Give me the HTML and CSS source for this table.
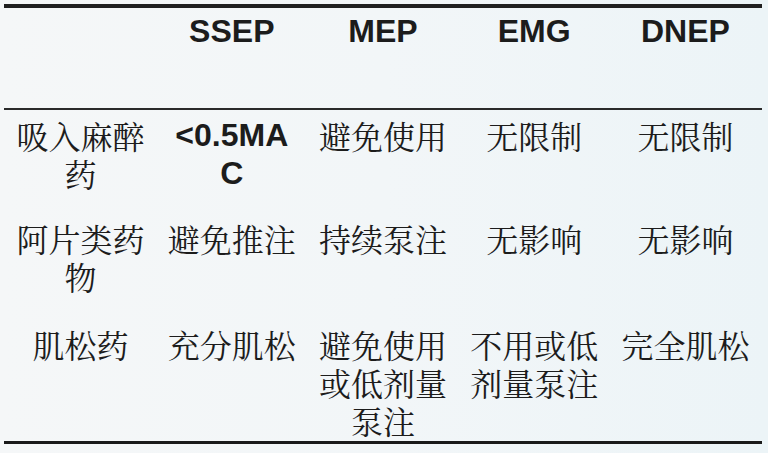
FILE: index.html
```html
<!DOCTYPE html>
<html lang="zh-CN">
<head>
<meta charset="utf-8">
<title>监测与麻醉药物</title>
<link rel="stylesheet" href="styles.css">
</head>
<body>
<div class="page">
  <div class="topline"></div>
  <div class="table">
    <div class="row head">
      <div class="cell"></div>
      <div class="cell latin">SSEP</div>
      <div class="cell latin">MEP</div>
      <div class="cell latin">EMG</div>
      <div class="cell latin">DNEP</div>
    </div>
    <div class="rule thin"></div>
    <div class="row r1">
      <div class="cell">吸入麻醉药</div>
      <div class="cell latin">&lt;0.5MAC</div>
      <div class="cell">避免使用</div>
      <div class="cell">无限制</div>
      <div class="cell">无限制</div>
    </div>
    <div class="row r2">
      <div class="cell">阿片类药物</div>
      <div class="cell">避免推注</div>
      <div class="cell">持续泵注</div>
      <div class="cell">无影响</div>
      <div class="cell">无影响</div>
    </div>
    <div class="row r3">
      <div class="cell">肌松药</div>
      <div class="cell">充分肌松</div>
      <div class="cell">避免使用或低剂量泵注</div>
      <div class="cell">不用或低剂量泵注</div>
      <div class="cell">完全肌松</div>
    </div>
  </div>
  <div class="rule thick"></div>
</div>
</body>
</html>
```
FILE: styles.css
```css
html, body {
  margin: 0;
  padding: 0;
}
body {
  width: 768px;
  height: 453px;
  overflow: hidden;
  background: linear-gradient(90deg, #f5f7f8 0%, #f2f6f8 50%, #ecf4f7 100%);
  font-family: "Noto Serif CJK SC", "Noto Sans CJK SC", serif;
  color: #1c1c1c;
}
.page {
  width: 758px;
  padding: 4px 5px 0 4px;
}
.topline {
  height: 4px;
  background: #202020;
}
.rule {
  background: #1a1a1a;
}
.thick {
  height: 3px;
}
.thin {
  height: 2px;
  background: #2a2a2a;
}
.row {
  display: grid;
  grid-template-columns: repeat(5, 1fr);
  padding: 0 1px;
}
.cell {
  font-size: 32px;
  line-height: 38px;
  text-align: center;
  padding: 0 9px;
  word-break: break-all;
}
.latin {
  font-family: "Liberation Sans", Arial, sans-serif;
  font-weight: bold;
}
.head {
  height: 96px;
  padding-top: 4px;
}
.r1 {
  padding-top: 6px;
  padding-bottom: 24px;
}
.r2 {
  padding-top: 3px;
  padding-bottom: 27px;
}
.r3 {
  padding-top: 3px;
  padding-bottom: 2px;
}
```
